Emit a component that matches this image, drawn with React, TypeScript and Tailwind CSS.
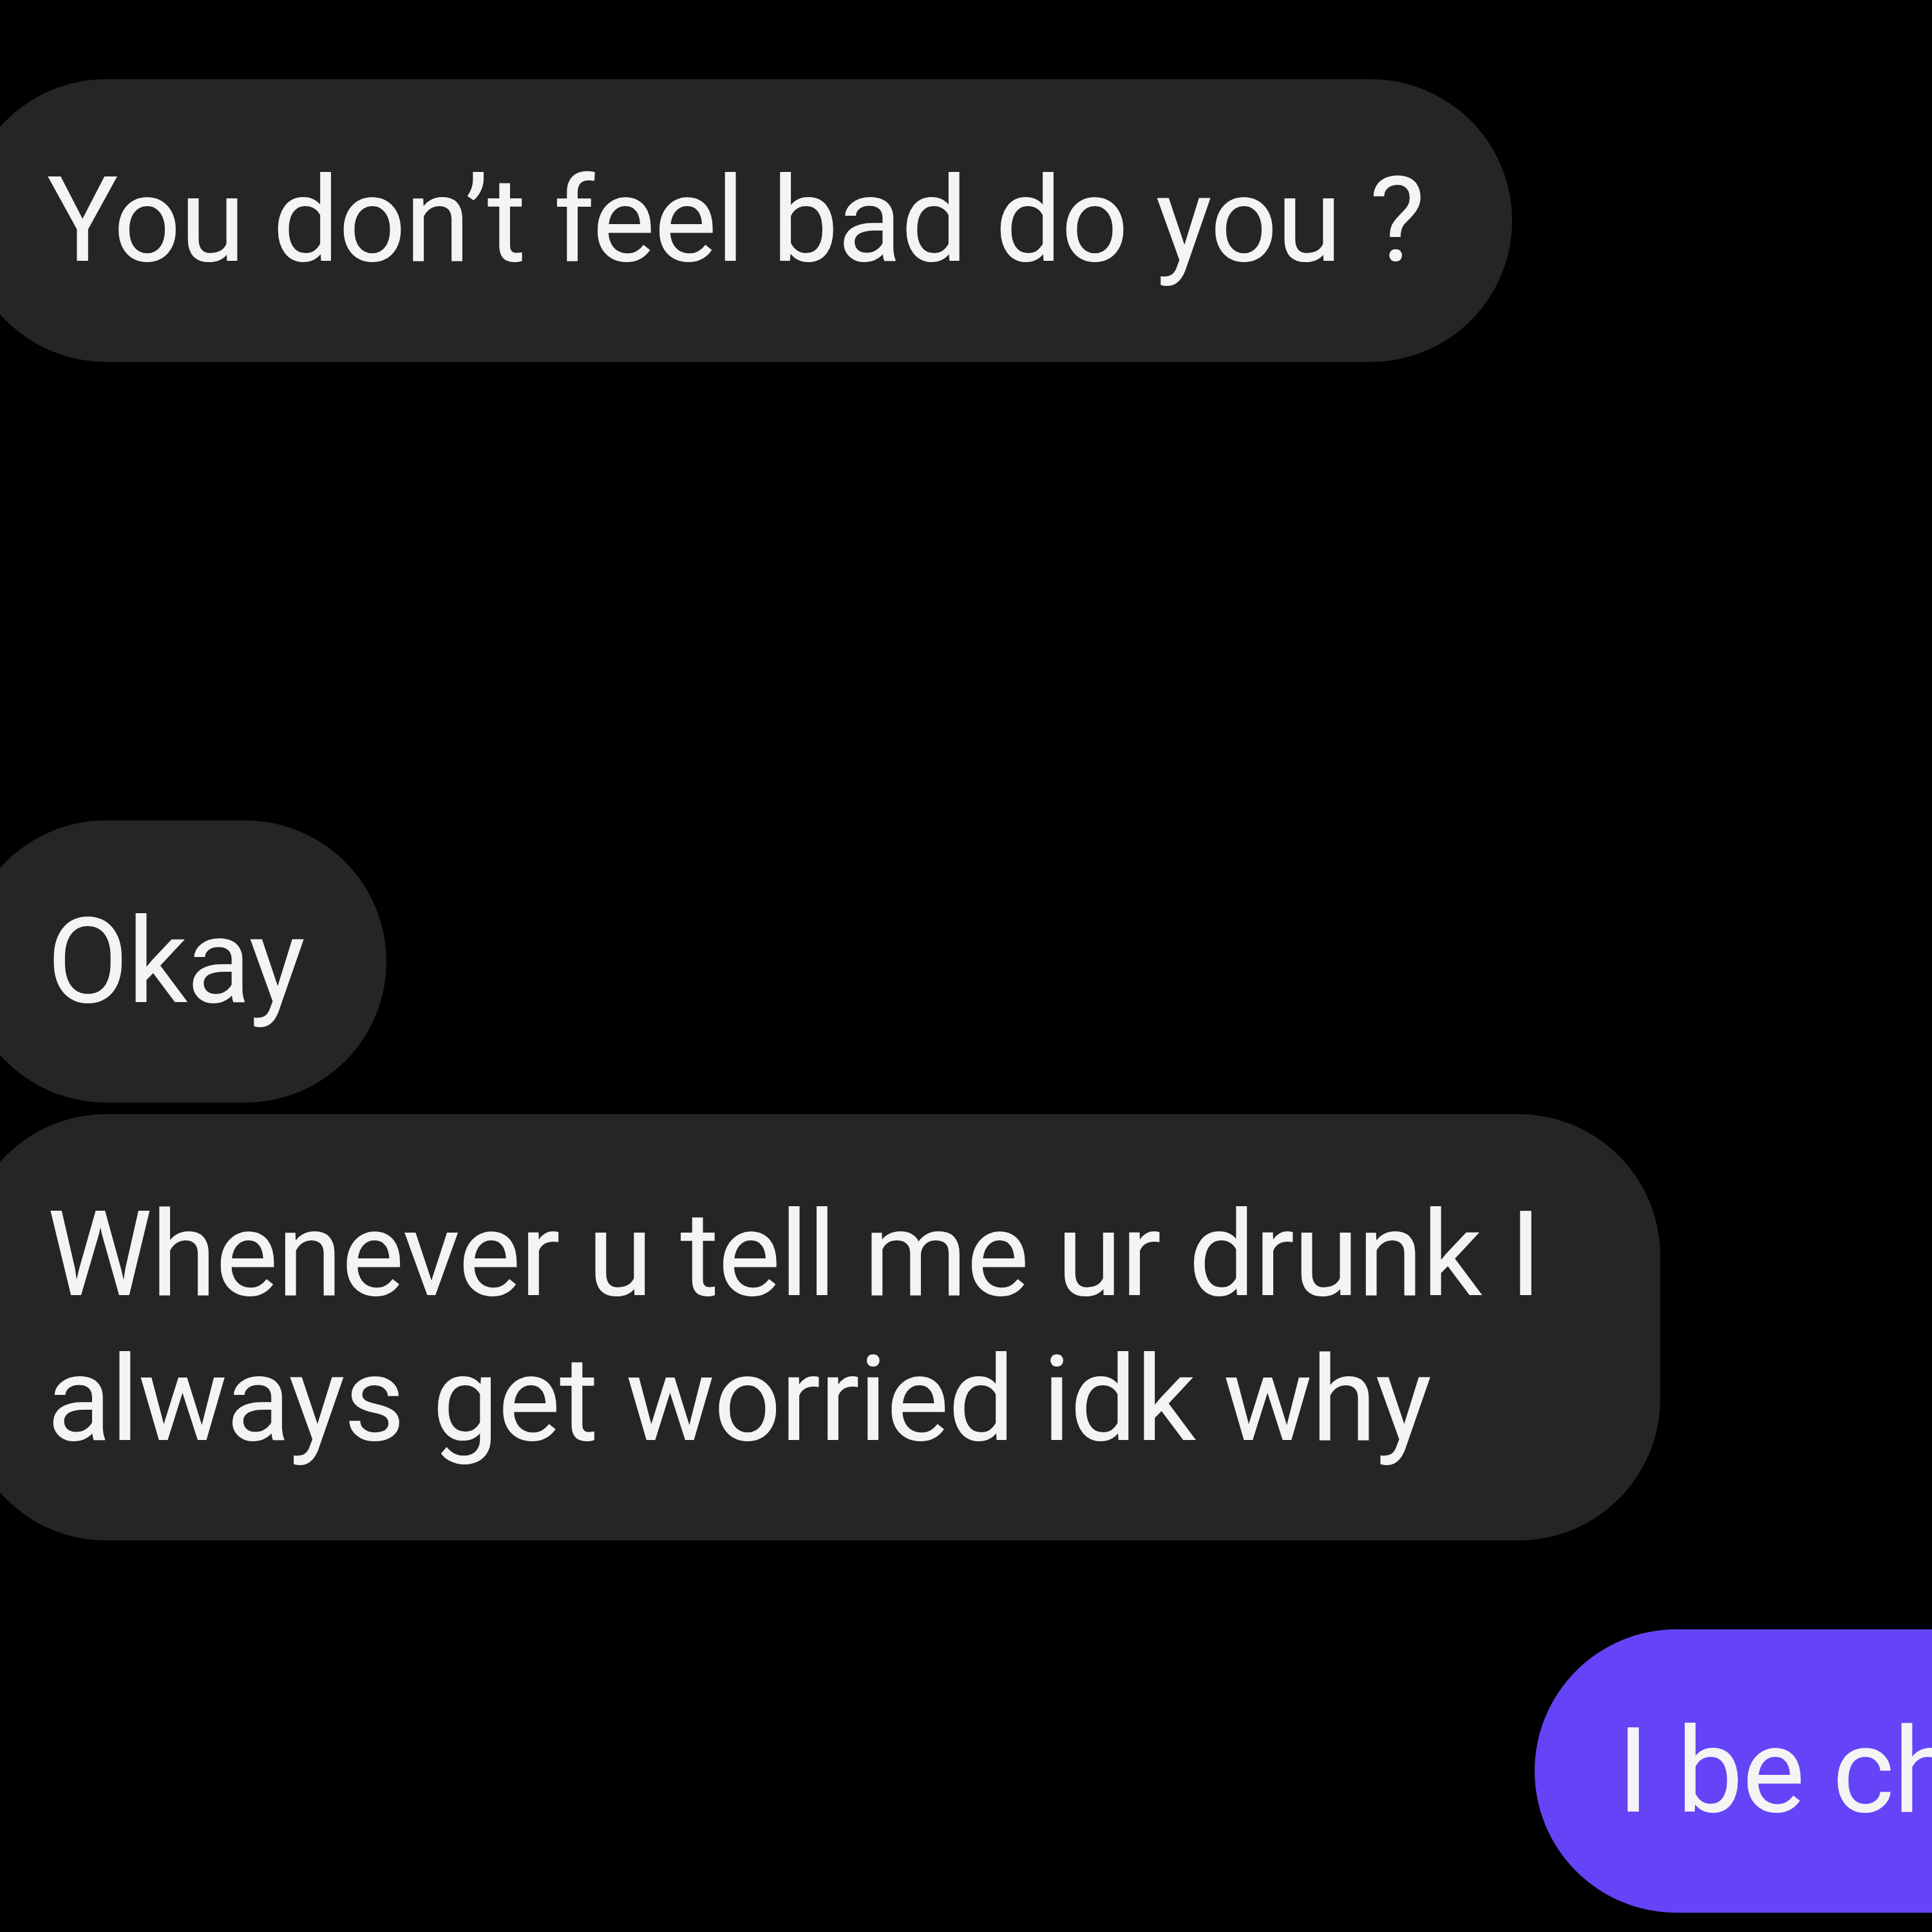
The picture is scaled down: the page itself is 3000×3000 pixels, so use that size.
const bubbleText = "font-['Roboto',sans-serif] text-[184px] leading-[225px] tracking-[-1.6px] text-[#f4f4f4] whitespace-nowrap";

function Incoming({ className, children }: { className: string; children: React.ReactNode }) {
  return (
    <div className={`ml-[-55px] flex items-center rounded-[220px] bg-[#252525] pl-[128px] ${className}`}>
      <div className={bubbleText}>{children}</div>
    </div>
  );
}

export default function App() {
  return (
    <div className="flex h-[3000px] w-[3000px] flex-col overflow-hidden bg-black pt-[123px]">
      <Incoming className="h-[439px] w-[2403px]">You don’t feel bad do you ?</Incoming>

      <Incoming className="mt-[712px] h-[438px] w-[655px]">Okay</Incoming>

      <Incoming className="mt-[18px] h-[662px] w-[2633px]">
        <div>Whenever u tell me ur drunk I</div>
        <div>always get worried idk why</div>
      </Incoming>

      <div className="mt-[138px] ml-[2383px] flex h-[440px] w-[1200px] shrink-0 items-center rounded-[220px] bg-[#6444f6] pl-[128px]">
        <div className={bubbleText}>I be chillin</div>
      </div>
    </div>
  );
}
